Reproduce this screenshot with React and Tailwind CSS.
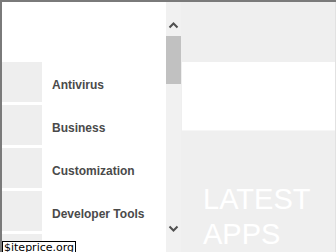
import React from "react";

function App() {
  const categories = ["Antivirus", "Business", "Customization", "Developer Tools", ""];

  return (
    <div
      className="relative w-[336px] h-[252px] overflow-hidden flex border-t-2 border-l-2 border-[#7a7a7a] bg-white"
      style={{ fontFamily: '"Liberation Sans", Arial, sans-serif' }}
    >
      {/* Category list */}
      <div className="w-[164px] shrink-0 bg-white pt-[60px] flex flex-col gap-[3px]">
        {categories.map((name, i) => (
          <div key={i} className="flex items-center h-[40px] shrink-0">
            <div className="w-[40px] h-[40px] bg-[#eeeeee] shrink-0" />
            {name && (
              <span className="ml-[10px] pt-[5px] text-[12px] leading-[14px] font-bold text-[#4a4a4a] whitespace-nowrap">
                {name}
              </span>
            )}
          </div>
        ))}
      </div>

      {/* Scrollbar */}
      <div className="w-[15px] shrink-0 bg-[#f1f1f1] flex flex-col items-center">
        <svg width="11" height="8" viewBox="0 0 11 8" className="mt-[19px]">
          <path d="M1.5 6.5 L5.5 2.5 L9.5 6.5" fill="none" stroke="#505050" strokeWidth="2" />
        </svg>
        <div className="mt-[7px] w-[15px] h-[48px] bg-[#c1c1c1]" />
        <div className="flex-1" />
        <svg width="11" height="8" viewBox="0 0 11 8" className="mb-[19px]">
          <path d="M1.5 1.5 L5.5 5.5 L9.5 1.5" fill="none" stroke="#505050" strokeWidth="2" />
        </svg>
      </div>

      {/* Right panel */}
      <div className="flex-1 bg-[#efefef] border-r border-[#e2e2e2] flex flex-col">
        <div className="h-[60px] shrink-0" />
        <div className="h-[69px] ml-[1px] bg-white border-b border-[#f6f6f6] shrink-0" />
        <div className="pt-[51px] pl-[22px] text-[29px] leading-[35px] text-white">
          <div>LATEST</div>
          <div>APPS</div>
        </div>
      </div>

      {/* Watermark */}
      <div
        className="absolute left-0 top-[239px] h-[13px] px-[1px] bg-white border border-black text-[11px] leading-[12px] text-black whitespace-nowrap"
        style={{ fontFamily: '"DejaVu Sans", sans-serif' }}
      >
        $iteprice.org
      </div>
    </div>
  );
}

export default App;
